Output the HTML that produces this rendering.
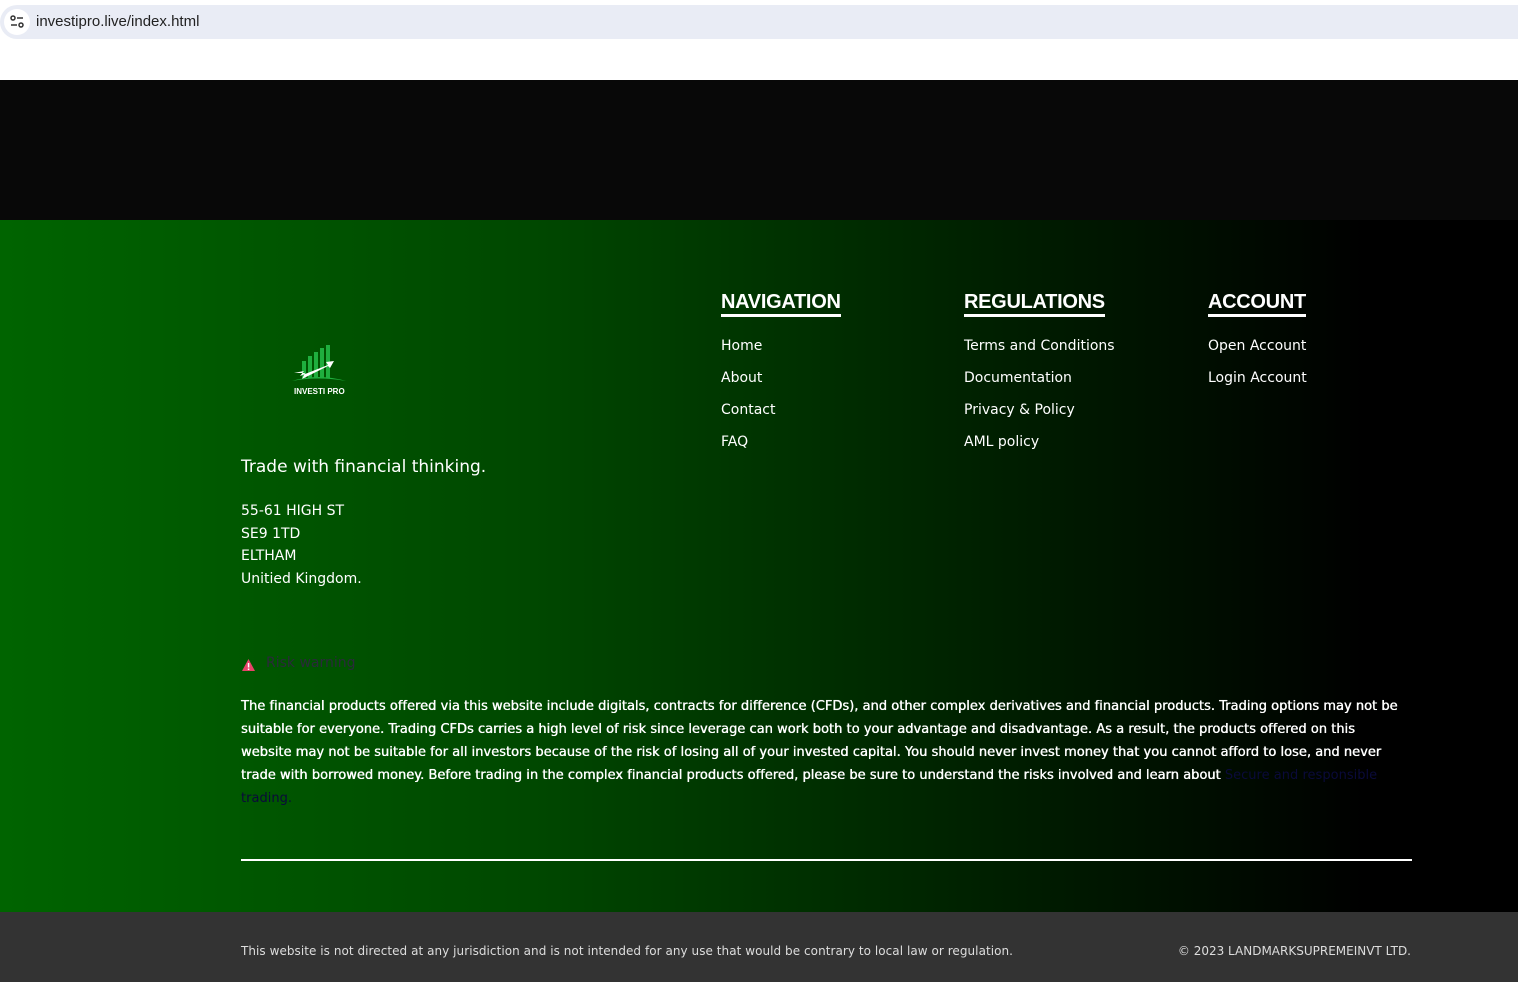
<!DOCTYPE html>
<html><head><meta charset="utf-8"><style>
*{margin:0;padding:0;box-sizing:border-box}
body{width:1518px;height:982px;overflow:hidden;font-family:"DejaVu Sans","Liberation Sans",sans-serif;background:#fff;position:relative}
.bar{position:absolute;left:0;top:5px;width:1518px;height:34px;background:#e9ecf5;border-radius:17px 0 0 17px}
.bar .ic{position:absolute;left:4px;top:4px;width:26px;height:26px;border-radius:50%;background:#fff}
.bar .url{position:absolute;left:36px;top:8px;font:15px "Liberation Sans",sans-serif;color:#222}
.black{position:absolute;left:0;top:80px;width:1518px;height:140px;background:#080808}
.green{position:absolute;left:0;top:220px;width:1518px;height:692px;background:linear-gradient(90deg,#006400 0%,#004800 35%,#002000 65%,#000 90%)}
.foot{position:absolute;left:0;top:912px;width:1518px;height:70px;background:#333;color:#ddd;font-size:12px}
.t{position:absolute;color:#fff;font-size:14px;white-space:nowrap}
h3{position:absolute;color:#fff;font:bold 20px "Liberation Sans",sans-serif;border-bottom:3px solid #fff;padding-bottom:0;line-height:24px;letter-spacing:-0.3px}
.p{position:absolute;left:241px;top:695px;width:1250px;color:#fff;font-size:13px;line-height:23px;white-space:nowrap;letter-spacing:0.02px;text-shadow:0 0 0.4px #fff,0.3px 0 0 #fff}
.hr{position:absolute;left:241px;top:859px;width:1171px;height:2px;background:#fff}
</style></head><body>
<div class="bar"><div class="ic"><svg width="26" height="26"><circle cx="9" cy="9" r="2" fill="none" stroke="#333" stroke-width="1.5"/><line x1="13" y1="9" x2="19" y2="9" stroke="#333" stroke-width="1.5"/><line x1="7" y1="16" x2="13" y2="16" stroke="#333" stroke-width="1.5"/><circle cx="17" cy="16" r="2" fill="none" stroke="#333" stroke-width="1.5"/></svg></div><div class="url">investipro.live/index.html</div></div>
<div class="black"></div>
<div class="green"></div>
<svg style="position:absolute;left:288px;top:343px" width="62" height="45">
<rect x="14" y="18" width="4" height="17" fill="#1fae3e"/><rect x="20" y="13" width="4" height="22" fill="#1fae3e"/><rect x="26" y="9" width="4" height="26" fill="#1fae3e"/><rect x="32" y="5" width="4" height="30" fill="#1fae3e"/><rect x="38" y="2" width="4" height="33" fill="#1fae3e"/>
<path d="M4 38 Q30 30 58 38 Q30 33 4 38Z" fill="#1fae3e"/>
<path d="M6 30 L16 28 L12 33 L40 22 L38 19 L46 18 L42 25 L40 23 L14 36 L17 30Z" fill="#fff"/>
</svg>
<div class="t" style="left:294px;top:387px;font:bold 8px 'Liberation Sans',sans-serif">INVESTI PRO</div>
<div class="t" style="left:241px;top:457px;font-size:17px">Trade with financial thinking.</div>
<div class="t" style="left:241px;top:500px;line-height:22.5px">55-61 HIGH ST<br>SE9 1TD<br>ELTHAM<br>Unitied Kingdom.</div>
<h3 style="left:721px;top:290px">NAVIGATION</h3>
<h3 style="left:964px;top:290px">REGULATIONS</h3>
<h3 style="left:1208px;top:290px">ACCOUNT</h3>
<div class="t" style="left:721px;top:330px;line-height:32px">Home<br>About<br>Contact<br>FAQ</div>
<div class="t" style="left:964px;top:330px;line-height:32px">Terms and Conditions<br>Documentation<br>Privacy &amp; Policy<br>AML policy</div>
<div class="t" style="left:1208px;top:330px;line-height:32px">Open Account<br>Login Account</div>
<svg style="position:absolute;left:241px;top:658px" width="15" height="14"><path d="M7.5 1 L14 13 L1 13Z" fill="#e8436a"/><rect x="6.8" y="5" width="1.5" height="4.5" fill="#fff"/><rect x="6.8" y="10.5" width="1.5" height="1.5" fill="#fff"/></svg>
<div class="t" style="left:266px;top:655px;color:#2a2a3a;font-size:14px">Risk warning</div>
<div class="p">The financial products offered via this website include digitals, contracts for difference (CFDs), and other complex derivatives and financial products. Trading options may not be<br>suitable for everyone. Trading CFDs carries a high level of risk since leverage can work both to your advantage and disadvantage. As a result, the products offered on this<br>website may not be suitable for all investors because of the risk of losing all of your invested capital. You should never invest money that you cannot afford to lose, and never<br>trade with borrowed money. Before trading in the complex financial products offered, please be sure to understand the risks involved and learn about <span style="color:#0a0a3a;text-shadow:none">Secure and responsible</span><br><span style="color:#0a0a3a;text-shadow:none">trading.</span></div>
<div class="hr"></div>
<div class="foot"><div style="position:absolute;left:241px;top:32px;letter-spacing:0.05px">This website is not directed at any jurisdiction and is not intended for any use that would be contrary to local law or regulation.</div><div style="position:absolute;right:107px;top:32px">© 2023 LANDMARKSUPREMEINVT LTD.</div></div>
</body></html>
